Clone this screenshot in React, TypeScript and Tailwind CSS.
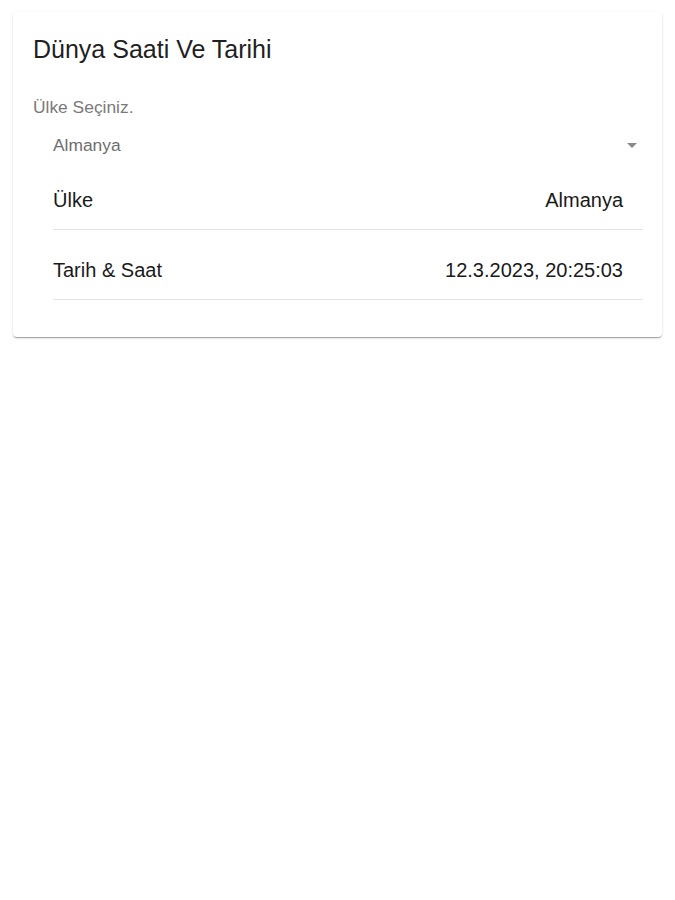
import { useState } from "react";

const rows = [
  { label: "Ülke", value: "Almanya" },
  { label: "Tarih & Saat", value: "12.3.2023, 20:25:03" },
];

export default function App() {
  const [country] = useState("Almanya");

  return (
    <div className="min-h-[900px] bg-white px-[13px] pt-[12px] font-['Liberation_Sans',Arial,sans-serif]">
      <div className="rounded-[4px] bg-white px-5 pb-[37px] pt-[23px] shadow-[0_2px_1px_-1px_rgba(0,0,0,0.2),0_1px_1px_0_rgba(0,0,0,0.14),0_1px_3px_0_rgba(0,0,0,0.12)]">
        <h1 className="text-[25px] leading-[28px] text-[#1f1f1f]">Dünya Saati Ve Tarihi</h1>

        <div className="mt-[34px] text-[17.4px] leading-[20px] text-[#7a7a7a]">Ülke Seçiniz.</div>

        {/* Select */}
        <div className="ml-5 mr-[4px] mt-[18px] flex h-[20px] items-center justify-between">
          <span className="text-[17.4px] leading-[20px] text-[#6e6e6e]">{country}</span>
          <svg width="10" height="5" viewBox="0 0 10 5" className="mr-[1px]">
            <path d="M0 0l5 5 5-5z" fill="#8a8a8a" />
          </svg>
        </div>

        {/* Table */}
        <div className="ml-5 mr-[-1px] mt-[5px]">
          {rows.map((r) => (
            <div
              key={r.label}
              className="flex items-start justify-between border-b border-[#e3e3e3] pb-[17px] pr-5 pt-[28px] text-[20px] leading-[24px] text-[#1a1a1a]"
            >
              <span>{r.label}</span>
              <span>{r.value}</span>
            </div>
          ))}
        </div>
      </div>
    </div>
  );
}
